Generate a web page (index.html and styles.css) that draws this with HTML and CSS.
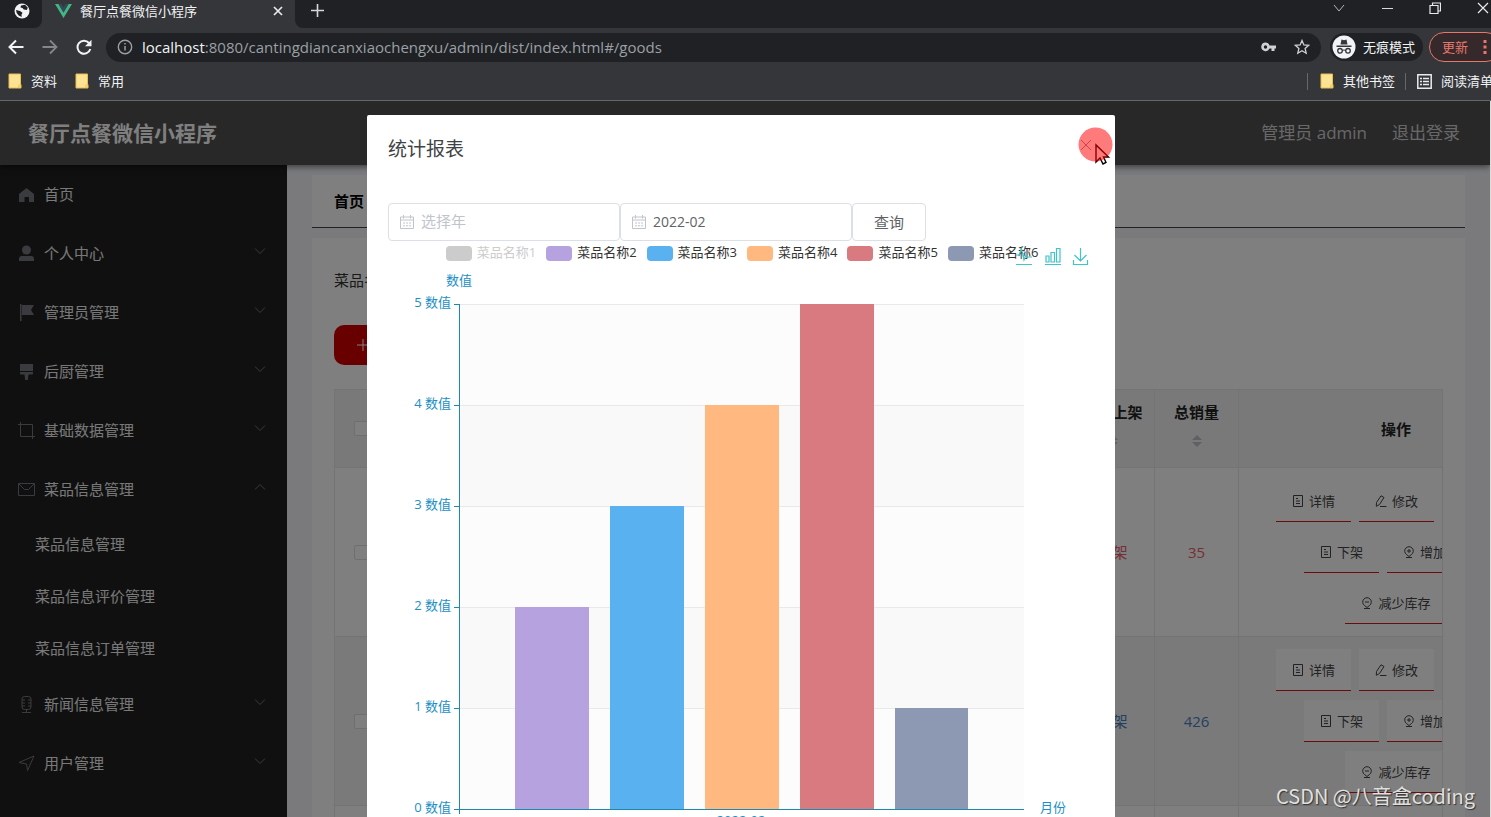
FILE: index.html
```html
<!DOCTYPE html>
<html lang="zh-CN">
<head>
<meta charset="utf-8">
<title>餐厅点餐微信小程序</title>
<link rel="stylesheet" href="styles.css">
</head>
<body>
<svg class="defs" aria-hidden="true">
  <symbol id="down" viewBox="0 0 12 12"><path d="M1 3.500l5 5 5-5" fill="none" stroke="currentColor"/></symbol>
  <symbol id="up" viewBox="0 0 12 12"><path d="M1 8.500l5-5 5 5" fill="none" stroke="currentColor"/></symbol>
  <symbol id="folder" viewBox="0 0 14 16"><path d="M1 1h11.500v10.500h.5V15H1z" fill="#ffe394" stroke="#e6bf4c"/><path d="M11 11.500v3.500" stroke="#e6bf4c"/></symbol>
  <symbol id="doc" viewBox="0 0 12 12"><path d="M1.500.5h9v11h-9zM4 3.500h2M4 6h4M4 8.500h4" fill="none" stroke="currentColor"/></symbol>
  <symbol id="edit" viewBox="0 0 12 12"><path d="M6 .8l3 1.700-4.500 7-3.200 1.800.2-3.800zM5 11.500h6.500" fill="none" stroke="currentColor"/></symbol>
  <symbol id="plus" viewBox="0 0 12 12"><path d="M3.500 8.500a4.300 4.300 0 1 1 5 0L6 10.500zM3 11.500h6M6 3v4M4 5h4" fill="none" stroke="currentColor"/></symbol>
  <symbol id="minus" viewBox="0 0 12 12"><path d="M3.500 8.500a4.300 4.300 0 1 1 5 0L6 10.500zM3 11.500h6M4 5h4" fill="none" stroke="currentColor"/></symbol>
  <symbol id="calendar" viewBox="0 0 14 14"><path d="M.5 2h13v11.500H.5zM.5 5h13M3.500 0v3.500M10.500 0v3.500" fill="none" stroke="currentColor"/><path d="M3 8h8M3 10.800h8" fill="none" stroke="currentColor" stroke-dasharray="2 1"/></symbol>
</svg>

<header class="browser">
  <div class="tabs">
    <div class="tab-pinned">
      <svg width="16" height="16" viewBox="0 0 16 16"><circle cx="8" cy="8" r="7.500" fill="#f1f3f4"/><path d="M7 2.500l4-.8 2.800 3-1 2.300-3-.5-1.300-1.500-2-.5zM2 7l4 1 2.500 1.800-1 2 .2 2.200-3-1.500-2-2.500z" fill="#202124"/></svg>
    </div>
    <div class="tab-active">
      <svg width="17" height="14" viewBox="0 0 17 14"><path d="M0 0h3.500l5 8.500 5-8.500H17L8.500 14z" fill="#41b883"/><path d="M3.500 0h3l2 3.500 2-3.500h3l-5 8.500z" fill="#35495e"/></svg>
      <span class="tab-title">餐厅点餐微信小程序</span>
      <button class="icon-btn" aria-label="关闭标签页"><svg width="10" height="10" viewBox="0 0 10 10"><path d="M1 1l8 8M9 1L1 9" stroke="#e8eaed" stroke-width="1.700"/></svg></button>
    </div>
    <div class="tab-rest">
      <button class="icon-btn new-tab" aria-label="新标签页"><svg width="13" height="13" viewBox="0 0 13 13"><path d="M6.500 0v13M0 6.500h13" stroke="#d5d6d8" stroke-width="1.600"/></svg></button>
      <div class="window-controls">
        <button class="icon-btn" aria-label="搜索标签页"><svg width="12" height="12" viewBox="0 0 12 12"><path d="M1 3l5 6 5-6" fill="none" stroke="#b5b6b8"/></svg></button>
        <button class="icon-btn" aria-label="最小化"><svg width="12" height="12" viewBox="0 0 12 12"><path d="M1 6.500h11" stroke="#d8d8d8"/></svg></button>
        <button class="icon-btn" aria-label="还原"><svg width="12" height="12" viewBox="0 0 12 12"><path d="M1 3.500h8v8H1zM3.500 3V1h8v8H9.500" fill="none" stroke="#e8eaed" stroke-width="1.200"/></svg></button>
        <button class="icon-btn" aria-label="关闭"><svg width="12" height="12" viewBox="0 0 12 12"><path d="M1 1l10 10M11 1L1 11" stroke="#e8eaed" stroke-width="1.200"/></svg></button>
      </div>
    </div>
  </div>
  <div class="toolbar">
    <button class="icon-btn" aria-label="后退"><svg width="16" height="16" viewBox="0 0 16 16"><path d="M15.500 8H2M8 1.500L1.500 8 8 14.500" fill="none" stroke="#f1f3f4" stroke-width="2"/></svg></button>
    <button class="icon-btn" aria-label="前进"><svg width="16" height="16" viewBox="0 0 16 16"><path d="M.5 8H14M8 1.500L14.500 8 8 14.500" fill="none" stroke="#85868a" stroke-width="1.800"/></svg></button>
    <button class="icon-btn" aria-label="重新加载"><svg width="16" height="16" viewBox="0 0 16 16"><path d="M13 4A6.500 6.500 0 1 0 14.300 10" fill="none" stroke="#f1f3f4" stroke-width="2"/><path d="M15.500.8v6.500H9z" fill="#f1f3f4"/></svg></button>
    <div class="omnibox">
      <svg width="16" height="16" viewBox="0 0 16 16"><circle cx="8" cy="8" r="6.700" fill="none" stroke="#9aa0a6" stroke-width="1.400"/><path d="M8 7v4.500M8 4v1.600" stroke="#9aa0a6" stroke-width="1.500"/></svg>
      <span class="url"><b>localhost</b>:8080/cantingdiancanxiaochengxu/admin/dist/index.html#/goods</span>
      <button class="icon-btn" aria-label="密码"><svg width="15" height="10" viewBox="0 0 15 10"><path d="M4.500.5a4.300 4.300 0 0 1 4 3H15v3h-1.500V9h-3V6.500h-2a4.300 4.300 0 1 1-4-6z" fill="#d0d1d3"/><circle cx="4.500" cy="5" r="1.700" fill="#202124"/></svg></button>
      <button class="icon-btn" aria-label="收藏"><svg width="16" height="16" viewBox="0 0 16 16"><path d="M8 1.500l1.900 4.400 4.800.4-3.600 3.200 1.100 4.700L8 11.700l-4.200 2.500 1.100-4.700L1.300 6.300l4.800-.4z" fill="none" stroke="#d0d1d3" stroke-width="1.300"/></svg></button>
    </div>
    <div class="incognito">
      <svg width="24" height="24" viewBox="0 0 24 24"><circle cx="12" cy="12" r="11.500" fill="#f1f3f4"/><path d="M8.500 9.500l1-5 2.500.7 2.500-.7 1 5zM4.500 10.500h15v1.500h-15z" fill="#35363a"/><path d="M10 15.500q2-1 4 0" fill="none" stroke="#35363a"/><circle cx="8" cy="15.800" r="2.300" fill="none" stroke="#35363a" stroke-width="1.300"/><circle cx="16" cy="15.800" r="2.300" fill="none" stroke="#35363a" stroke-width="1.300"/></svg>
      <span>无痕模式</span>
    </div>
    <button class="update">更新<svg width="4" height="14" viewBox="0 0 4 14"><path d="M2 0v14" stroke="#e5776d" stroke-width="3" stroke-dasharray="3 2.500"/></svg></button>
  </div>
  <nav class="bookmarks">
    <a href="#"><svg width="14" height="16"><use href="#folder"/></svg>资料</a>
    <a href="#"><svg width="14" height="16"><use href="#folder"/></svg>常用</a>
    <span class="grow"></span>
    <a class="divided" href="#"><svg width="14" height="16"><use href="#folder"/></svg>其他书签</a>
    <a class="divided reading" href="#"><svg width="15" height="15" viewBox="0 0 15 15"><path d="M.8.8h13.400v13.400H.8z" fill="none" stroke="#e8eaed" stroke-width="1.500"/><path d="M3 4.500h2M3 7.500h2M3 10.500h2M6 4.500h6M6 7.500h6M6 10.500h6" stroke="#e8eaed" stroke-width="1.500"/></svg>阅读清单</a>
  </nav>
</header>

<div class="app">
  <header class="app-header">
    <h1>餐厅点餐微信小程序</h1>
    <span>管理员 admin</span>
    <a href="#">退出登录</a>
  </header>
  <div class="app-body">
    <nav class="sidebar">
      <a class="item" href="#"><svg width="17" height="17" viewBox="0 0 17 17"><path d="M8.500 2L16 8v8h-5v-5H6.500v5H1V8z" fill="currentColor"/></svg><span>首页</span></a>
      <a class="item" href="#"><svg width="17" height="17" viewBox="0 0 17 17"><circle cx="8.500" cy="5" r="4.500" fill="currentColor"/><path d="M1 16v-2q0-3 3-3h9q3 0 3 3v2z" fill="currentColor"/></svg><span>个人中心</span><svg class="caret"><use href="#down"/></svg></a>
      <a class="item" href="#"><svg width="17" height="17" viewBox="0 0 17 17"><path d="M2 0h1.500v17H2zM4 1h12l-3 5 3 5H4z" fill="currentColor"/></svg><span>管理员管理</span><svg class="caret"><use href="#down"/></svg></a>
      <a class="item" href="#"><svg width="17" height="17" viewBox="0 0 17 17"><path d="M2 1h13v7H2zM2 9h13v1.500q0 1-1 1h-3.500L9.800 17H7.200l-.7-5.500H3q-1 0-1-1z" fill="currentColor"/></svg><span>后厨管理</span><svg class="caret"><use href="#down"/></svg></a>
      <a class="item" href="#"><svg width="17" height="17" viewBox="0 0 17 17"><path d="M0 2.500h14.500V17M2.500 0v14.500H17" fill="none" stroke="currentColor"/></svg><span>基础数据管理</span><svg class="caret"><use href="#down"/></svg></a>
      <a class="item" href="#"><svg width="17" height="17" viewBox="0 0 17 17"><path d="M.5 2.500h16v12H.5zM1 3l5.500 5.500h4L16 3" fill="none" stroke="currentColor"/></svg><span>菜品信息管理</span><svg class="caret"><use href="#up"/></svg></a>
      <a class="sub" href="#">菜品信息管理</a>
      <a class="sub" href="#">菜品信息评价管理</a>
      <a class="sub" href="#">菜品信息订单管理</a>
      <a class="item" href="#"><svg width="17" height="17" viewBox="0 0 17 17"><rect x="4" y=".5" width="9" height="13" rx="2.500" fill="none" stroke="currentColor"/><path d="M4 4h3M4 7h3M4 10h3M10 4h3M10 7h3M10 10h3M8.500 13.500v3M4 16.500h9" stroke="currentColor"/></svg><span>新闻信息管理</span><svg class="caret"><use href="#down"/></svg></a>
      <a class="item" href="#"><svg width="17" height="17" viewBox="0 0 17 17"><path d="M1 7.500L16 1 9.500 15.500 8.500 9z" fill="none" stroke="currentColor"/></svg><span>用户管理</span><svg class="caret"><use href="#down"/></svg></a>
    </nav>
    <main>
      <div class="crumb">首页</div>
      <section class="panel">
        <p class="search-label">菜品名称</p>
        <button class="add"><svg width="12" height="12" viewBox="0 0 12 12"><path d="M6 0v12M0 6h12" stroke="#fff"/></svg>新增</button>
        <div class="table-clip">
          <table>
            <colgroup><col class="c-check"><col><col class="c-num"><col class="c-num"><col class="c-ops"></colgroup>
            <thead>
              <tr>
                <th><input type="checkbox" aria-label="全选"></th><th></th>
                <th class="sortable">是否上架<svg class="sort" viewBox="0 0 10 12"><path d="M0 5l5-5 5 5zM0 7l5 5 5-5z" fill="#bcc0c8"/></svg></th>
                <th class="sortable">总销量<svg class="sort" viewBox="0 0 10 12"><path d="M0 5l5-5 5 5zM0 7l5 5 5-5z" fill="#bcc0c8"/></svg></th>
                <th>操作</th>
              </tr>
            </thead>
            <tbody>
              <tr class="red">
                <td><input type="checkbox" aria-label="选择第1行"></td><td></td><td>上架</td><td>35</td>
                <td>
                  <div class="ops first"><button><svg><use href="#doc"/></svg>详情</button><button><svg><use href="#edit"/></svg>修改</button></div>
                  <div class="ops"><button><svg><use href="#doc"/></svg>下架</button><button><svg><use href="#plus"/></svg>增加库存</button></div>
                  <div class="ops"><button><svg><use href="#minus"/></svg>减少库存</button></div>
                </td>
              </tr>
              <tr class="blue">
                <td><input type="checkbox" aria-label="选择第2行"></td><td></td><td>上架</td><td>426</td>
                <td>
                  <div class="ops first"><button><svg><use href="#doc"/></svg>详情</button><button><svg><use href="#edit"/></svg>修改</button></div>
                  <div class="ops"><button><svg><use href="#doc"/></svg>下架</button><button><svg><use href="#plus"/></svg>增加库存</button></div>
                  <div class="ops"><button><svg><use href="#minus"/></svg>减少库存</button></div>
                </td>
              </tr>
              <tr><td></td><td></td><td></td><td></td><td></td></tr>
            </tbody>
          </table>
        </div>
      </section>
    </main>
  </div>

  <div class="overlay">
    <div class="dialog" role="dialog" aria-labelledby="dialog-title">
      <div class="dialog-head">
        <h2 id="dialog-title">统计报表</h2>
        <button class="icon-btn close" aria-label="关闭"><svg width="12" height="12" viewBox="0 0 12 12"><path d="M1 1l10 10M11 1L1 11" stroke="#909399"/></svg></button>
        <svg class="pointer" width="36" height="40" viewBox="0 0 36 40"><path d="M18 18v17l4-4 3 6 3-1.500-2.500-5.500h5z" fill="#fff" stroke="#000" stroke-width="1.400"/><circle cx="17.500" cy="17.500" r="17" fill="#ff0000" fill-opacity=".52"/></svg>
      </div>
      <form class="filters">
        <label class="picker"><svg width="14" height="14"><use href="#calendar"/></svg><input type="text" placeholder="选择年" aria-label="选择年"></label>
        <label class="picker"><svg width="14" height="14"><use href="#calendar"/></svg><input type="text" value="2022-02" aria-label="选择月"></label>
        <button type="button">查询</button>
      </form>
      <div class="chart">
        <ul class="legend">
          <li class="off"><i class="s1"></i>菜品名称1</li>
          <li><i class="s2"></i>菜品名称2</li>
          <li><i class="s3"></i>菜品名称3</li>
          <li><i class="s4"></i>菜品名称4</li>
          <li><i class="s5"></i>菜品名称5</li>
          <li><i class="s6"></i>菜品名称6</li>
        </ul>
        <svg class="toolbox" width="76" height="20" viewBox="0 0 76 20" fill="none" stroke="#3fc4ca" stroke-width="1.200">
          <path d="M1 18.500h16M1 9h3l2.500-6L9 14l2-5 1.500 2H17"/>
          <path d="M30 18.500h16M31 10h3v6h-3zM36 6.500h3.500V16H36zM41.500 2.500H45V16h-3.500z"/>
          <path d="M58.500 14v4.500h14V14M65.500 2v13M59.500 9l6 6 6-6"/>
        </svg>
        <svg class="plot" viewBox="0 0 706 572">
          <rect x="71" y="39" width="565" height="101" fill="#fcfcfc"/>
          <rect x="71" y="140" width="565" height="101" fill="#f9f9f9"/>
          <rect x="71" y="241" width="565" height="101" fill="#fcfcfc"/>
          <rect x="71" y="342" width="565" height="101" fill="#f9f9f9"/>
          <rect x="71" y="443" width="565" height="101" fill="#fcfcfc"/>
          <path d="M71 39.500h565M71 140.500h565M71 241.500h565M71 342.500h565M71 443.500h565" stroke="#e9e9e9"/>
          <rect x="127" y="342" width="74" height="202" fill="#b6a2de"/>
          <rect x="222" y="241" width="74" height="303" fill="#5ab1ef"/>
          <rect x="317" y="140" width="74" height="404" fill="#ffb980"/>
          <rect x="412" y="39" width="74" height="505" fill="#d87a80"/>
          <rect x="507" y="443" width="73" height="101" fill="#8d98b3"/>
          <path d="M71.500 39v510M66 39.500h5M66 140.500h5M66 241.500h5M66 342.500h5M66 443.500h5M66 544.500h570" fill="none" stroke="#1f88ae"/>
          <g class="axis" text-anchor="end">
            <text x="63" y="42">5 数值</text><text x="63" y="143">4 数值</text><text x="63" y="244">3 数值</text><text x="63" y="345">2 数值</text><text x="63" y="446">1 数值</text><text x="63" y="547">0 数值</text>
          </g>
          <g class="axis"><text x="58" y="20">数值</text><text x="652" y="547">月份</text><text x="353" y="560" text-anchor="middle">2022-02</text></g>
        </svg>
      </div>
    </div>
  </div>
  <div class="watermark">CSDN @八音盒coding</div>
</div>
</body>
</html>
```
FILE: styles.css
```css
* { box-sizing: border-box; }
body {
  margin: 0;
  height: 100vh;
  display: flex;
  flex-direction: column;
  overflow: hidden;
  font: 15px/20px "Open Sans", "Noto Sans CJK SC", sans-serif;
}
a { color: inherit; text-decoration: none; }
button { font: inherit; cursor: pointer; }
svg { flex: none; }
.defs { display: none; }
.icon-btn { display: flex; padding: 0; border: 0; background: none; }
.grow { flex: 1; }

/* Browser window */
.browser { flex: none; background: #35363a; color: #f1f3f4; border-bottom: 1px solid #66676b; font-size: 13px; }
.tabs { display: flex; height: 28px; }
.tab-pinned { width: 42px; padding: 3px 0 0 14px; background: #202124; border-bottom-right-radius: 8px; }
.tab-active { width: 253px; display: flex; align-items: center; gap: 8px; padding: 0 12px 6px 13px; }
.tab-title { flex: 1; white-space: nowrap; }
.tab-rest { flex: 1; display: flex; background: #202124; border-bottom-left-radius: 8px; }
.new-tab { padding: 4px 0 0 16px; align-items: flex-start; }
.window-controls { margin-left: auto; display: flex; align-items: flex-start; gap: 36px; padding: 2px 2px 0 0; }
.toolbar { display: flex; align-items: center; height: 38px; padding-left: 8px; gap: 18px; }
.omnibox { flex: 1; display: flex; align-items: center; gap: 18px; height: 29px; margin: 0 -9px 0 -4px; padding: 0 11px; background: #202124; border-radius: 15px; }
.url { flex: 1; margin-left: -9px; color: #9aa0a6; font-size: 15px; white-space: nowrap; }
.url b { color: #f1f3f4; font-weight: 400; }
.incognito { display: flex; align-items: center; gap: 7px; height: 28px; padding: 0 8px 0 2px; background: #202124; border-radius: 14px; }
.update { display: flex; align-items: center; gap: 15px; height: 30px; margin: 0 -10px 0 -12px; padding: 0 13px 0 12px; color: #e5776d; background: #35292b; border: 1px solid #e5776d; border-radius: 15px; }
.bookmarks { display: flex; align-items: center; height: 34px; padding: 0 0 4px 8px; overflow: hidden; gap: 18px; white-space: nowrap; }
.bookmarks a { display: flex; align-items: center; gap: 9px; }
.bookmarks .divided { border-left: 1px solid #66676b; padding-left: 12px; margin-right: -8px; height: 17px; }
.bookmarks .divided.reading { gap: 9px; padding-left: 11px; margin-right: -2px; }

/* Application shell */
.app { position: relative; flex: 1; min-height: 0; display: flex; flex-direction: column; overflow: hidden; border-right: 1px solid #ddd; }
.app-header { position: relative; z-index: 1; flex: none; display: flex; align-items: center; gap: 25px; height: 64px; padding: 0 30px 0 28px; background: #505050; color: #d0d0d0; font-size: 17px; box-shadow: 0 2px 6px rgba(0, 0, 0, .5); }
.app-header h1 { flex: 1; margin: 0; color: #fff; font-size: 21px; }
.app-body { flex: 1; min-height: 0; display: flex; }
.sidebar { flex: none; width: 287px; background: #202020; color: #fff; }
.item { display: flex; align-items: center; gap: 9px; height: 59px; padding: 0 21px 0 18px; color: #75777c; }
.item span { flex: 1; margin-bottom: 2px; color: #f0f0f0; }
.caret { width: 12px; height: 12px; margin-bottom: 6px; }
.sub { display: flex; align-items: center; height: 52px; padding: 0 0 2px 35px; color: #f0f0f0; }
main { flex: 1; min-width: 0; display: flex; flex-direction: column; gap: 10px; padding: 10px 25px 0; background: #f4f5fb; }
.crumb { padding: 16px 22px; background: #fff; border-bottom: 1px solid #444; font-weight: 700; }
.panel { flex: 1; min-height: 0; padding: 32px 22px 0; background: #fff; overflow: hidden; color: #333; }
.search-label { margin: 0 0 35px; }
.add { display: flex; align-items: center; gap: 8px; height: 40px; margin-bottom: 24px; padding: 0 23px; border: 0; border-radius: 10px; background: #d20000; color: #fff; }
.table-clip { overflow: hidden; border-right: 1px solid #e6e6e6; }
table { width: calc(100% + 112px); table-layout: fixed; border-collapse: collapse; text-align: center; }
.c-check { width: 54px; }
.c-num { width: 84px; }
.c-ops { width: 315px; }
th, td { padding: 0; border: 1px solid #e8e8e8; }
th { height: 78px; background: #f2f2f2; color: #222; }
.sortable { padding-bottom: 8px; white-space: nowrap; }
td { height: 169px; }
td input, th input { appearance: none; display: block; width: 15px; height: 15px; margin: 0 auto; border: 1px solid #dcdfe6; border-radius: 2px; background: #fff; }
.sort { display: block; width: 10px; height: 12px; margin: 13px auto 0; }
.red { color: #e8606a; }
.blue { color: #4a80c0; background: #f4f4f4; }
.ops { display: flex; justify-content: center; gap: 8px; margin-bottom: 9px; }
.ops:last-child { margin-bottom: 0; }
.ops.first { padding-right: 82px; }
.ops button { flex: none; display: flex; align-items: center; gap: 5px; height: 42px; padding: 0 16px; border: 0; border-bottom: 1px solid #d01818; background: #fff; color: #444; font-size: 13px; }
.ops svg { width: 12px; height: 12px; }

/* Report dialog */
.overlay { position: absolute; inset: 0; z-index: 2; padding: 14px 8px 0 0; background: rgba(0, 0, 0, .5); }
.dialog { width: 50%; min-width: 748px; margin: 0 auto; padding: 0 21px; background: #fff; border-radius: 2px; }
.dialog-head { position: relative; display: flex; align-items: center; height: 68px; margin-bottom: 20px; }
.dialog-head h2 { flex: 1; margin: 0; color: #404246; font-weight: 400; font-size: 19px; }
.close { padding: 0 2px 9px 0; }
.pointer { position: absolute; top: 12px; right: -20px; }
.filters { display: flex; }
.picker { display: flex; align-items: center; gap: 7px; flex: 0 1 232px; height: 38px; padding: 0 10px 0 11px; border: 1px solid #dcdfe6; border-radius: 4px; color: #c0c4cc; }
.picker input { flex: 1; min-width: 0; padding: 0; border: 0; outline: 0; background: none; color: #606266; font: inherit; font-size: 14px; }
.picker input::placeholder { color: #c0c4cc; font-size: 15px; }
.filters button { height: 38px; padding: 0 21px; border: 1px solid #dcdfe6; border-radius: 4px; background: #fff; color: #606266; }
.chart { position: relative; }
.legend { display: flex; justify-content: center; gap: 10px; height: 24px; margin: 0; padding: 0 0 0 2px; list-style: none; color: #333; font-size: 13px; line-height: 22px; white-space: nowrap; }
.legend li { display: flex; gap: 5px; }
.legend i { width: 26px; height: 15px; margin-top: 5px; border-radius: 4px; }
.legend .off { color: #ccc; }
.s1 { background: #ccc; }
.s2 { background: #b6a2de; }
.s3 { background: #5ab1ef; }
.s4 { background: #ffb980; }
.s5 { background: #d87a80; }
.s6 { background: #8d98b3; }
.toolbox { position: absolute; top: 5px; right: 3px; }
.plot { display: block; width: 100%; }
.axis { fill: #1c8fc4; font-size: 13px; }

.watermark { position: absolute; right: 15px; bottom: 8px; z-index: 3; color: #e0e0e0; font-family: "Noto Sans CJK SC", sans-serif; font-size: 20px; line-height: 26px; text-shadow: 1px 1px 1px #333; }
```
